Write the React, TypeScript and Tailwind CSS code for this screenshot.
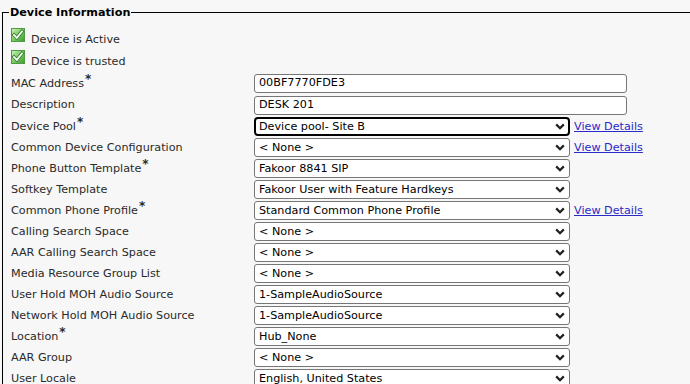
import React from "react";

type Row = { label: string; req?: boolean; value: string; focus?: boolean; link?: boolean };

const rows: Row[] = [
  { label: "Device Pool", req: true, value: "Device pool- Site B", focus: true, link: true },
  { label: "Common Device Configuration", value: "< None >", link: true },
  { label: "Phone Button Template", req: true, value: "Fakoor 8841 SIP" },
  { label: "Softkey Template", value: "Fakoor User with Feature Hardkeys" },
  { label: "Common Phone Profile", req: true, value: "Standard Common Phone Profile", link: true },
  { label: "Calling Search Space", value: "< None >" },
  { label: "AAR Calling Search Space", value: "< None >" },
  { label: "Media Resource Group List", value: "< None >" },
  { label: "User Hold MOH Audio Source", value: "1-SampleAudioSource" },
  { label: "Network Hold MOH Audio Source", value: "1-SampleAudioSource" },
  { label: "Location", req: true, value: "Hub_None" },
  { label: "AAR Group", value: "< None >" },
  { label: "User Locale", value: "English, United States" },
];

function Check({ id }: { id: string }) {
  return (
    <svg width="14" height="14" viewBox="0 0 14 14" className="shrink-0">
      <defs>
        <linearGradient id={id} x1="0" y1="0" x2="1" y2="1">
          <stop offset="0" stopColor="#d2f0c0" />
          <stop offset="0.5" stopColor="#7cca62" />
          <stop offset="1" stopColor="#3b9b2e" />
        </linearGradient>
      </defs>
      <rect x="0.5" y="0.5" width="13" height="13" fill={`url(#${id})`} stroke="#4f9d42" />
      <path d="M3 7 L5.8 9.8 L11 3.4" fill="none" stroke="#2c7a24" strokeWidth="3.4" strokeLinecap="square" />
      <path d="M3 7 L5.8 9.8 L11 3.4" fill="none" stroke="#ffffff" strokeWidth="1.8" strokeLinecap="square" />
    </svg>
  );
}

function Chevron() {
  return (
    <svg width="10" height="7" viewBox="0 0 10 7" className="shrink-0">
      <path d="M1.2 1.4 L5 5.2 L8.8 1.4" fill="none" stroke="#1f1f1f" strokeWidth="2.2" />
    </svg>
  );
}

function Label({ text, req }: { text: string; req?: boolean }) {
  return (
    <div className="w-[243px] shrink-0 text-[#2a2a2a] whitespace-nowrap">
      {text}
      {req && <span className="relative -top-[4px] ml-[1px] font-bold text-[12px]">*</span>}
    </div>
  );
}

function Select({ value, focus }: { value: string; focus?: boolean }) {
  return (
    <div
      className={
        focus
          ? "w-[316px] h-[19px] bg-white border-2 border-black rounded-[4px] flex items-center justify-between pl-[3px] pr-[3px]"
          : "w-[316px] h-[19px] bg-white border border-[#767676] rounded-[3px] flex items-center justify-between pl-[4px] pr-[4px]"
      }
    >
      <span className="text-black whitespace-nowrap">{value}</span>
      <Chevron />
    </div>
  );
}

export default function App() {
  return (
    <div
      className="w-[690px] h-[384px] overflow-hidden bg-[#f7f7f7] pt-[4px] pl-[2px] text-[11.2px] leading-[14px]"
      style={{ fontFamily: '"DejaVu Sans", Verdana, sans-serif' }}
    >
      <fieldset className="border-t border-l border-black w-[760px] pl-[8px] m-0">
        <legend className="font-bold text-[11.2px] leading-[17px] -ml-[2px] px-[1px] text-black">Device Information</legend>
        <div className="mt-[7px] flex flex-col">
          <div className="h-[22px] flex items-start gap-[6px]">
            <Check id="cg1" />
            <span className="mt-[5px] text-[#2a2a2a]">Device is Active</span>
          </div>
          <div className="h-[22px] flex items-start gap-[6px]">
            <Check id="cg2" />
            <span className="mt-[5px] text-[#2a2a2a]">Device is trusted</span>
          </div>
          <div className="h-[22px] flex items-center">
            <Label text="MAC Address" req />
            <div className="w-[373px] h-[19px] bg-white border border-[#767676] rounded-[3px] flex items-center pl-[4px] text-black">
              00BF7770FDE3
            </div>
          </div>
          <div className="h-[22px] flex items-center">
            <Label text="Description" />
            <div className="w-[373px] h-[19px] bg-white border border-[#767676] rounded-[3px] flex items-center pl-[4px] text-black">
              DESK 201
            </div>
          </div>
          {rows.map((r) => (
            <div key={r.label} className="h-[21px] flex items-center">
              <Label text={r.label} req={r.req} />
              <Select value={r.value} focus={r.focus} />
              {r.link && (
                <a href="#" className="ml-[4px] text-[#2a2ac8] underline whitespace-nowrap">
                  View Details
                </a>
              )}
            </div>
          ))}
        </div>
      </fieldset>
    </div>
  );
}
